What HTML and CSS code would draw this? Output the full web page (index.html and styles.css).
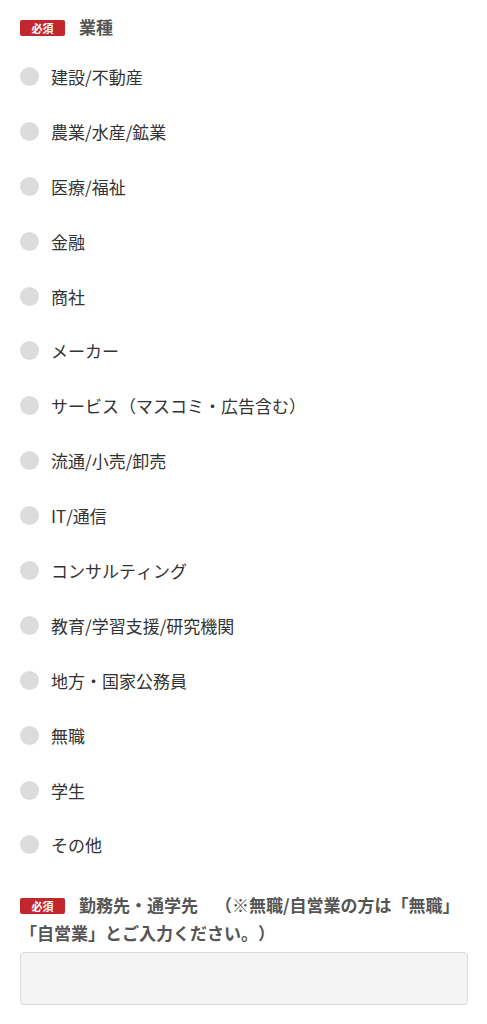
FILE: index.html
```html
<!DOCTYPE html>
<html lang="ja">
<head>
<meta charset="utf-8">
<link rel="stylesheet" href="styles.css">
</head>
<body>
<div class="form">
  <div class="field-head">
    <span class="badge">必須</span><span class="head-text">業種</span>
  </div>
  <ul class="radios">
    <li class="radio"><span class="dot"></span><span class="label">建設/不動産</span></li>
    <li class="radio"><span class="dot"></span><span class="label">農業/水産/鉱業</span></li>
    <li class="radio"><span class="dot"></span><span class="label">医療/福祉</span></li>
    <li class="radio"><span class="dot"></span><span class="label">金融</span></li>
    <li class="radio"><span class="dot"></span><span class="label">商社</span></li>
    <li class="radio"><span class="dot"></span><span class="label">メーカー</span></li>
    <li class="radio"><span class="dot"></span><span class="label">サービス（マスコミ・広告含む）</span></li>
    <li class="radio"><span class="dot"></span><span class="label">流通/小売/卸売</span></li>
    <li class="radio"><span class="dot"></span><span class="label">IT/通信</span></li>
    <li class="radio"><span class="dot"></span><span class="label">コンサルティング</span></li>
    <li class="radio"><span class="dot"></span><span class="label">教育/学習支援/研究機関</span></li>
    <li class="radio"><span class="dot"></span><span class="label">地方・国家公務員</span></li>
    <li class="radio"><span class="dot"></span><span class="label">無職</span></li>
    <li class="radio"><span class="dot"></span><span class="label">学生</span></li>
    <li class="radio"><span class="dot"></span><span class="label">その他</span></li>
  </ul>
  <div class="field-head field-head-2">
    <span class="badge">必須</span><span class="head-text">勤務先・通学先　（※無職/自営業の方は「無職」「自営業」とご入力ください。）</span>
  </div>
  <div class="input"></div>
</div>
</body>
</html>
```
FILE: styles.css
```css
* { box-sizing: border-box; }
body {
  margin: 0;
  background: #fff;
  font-family: "Noto Sans CJK JP", "Noto Sans", sans-serif;
  color: #333;
  text-spacing-trim: space-all;
  font-kerning: none;
}
.form {
  padding: 13px 19px 0 20px;
}
.field-head {
  font-size: 17px;
  line-height: 28px;
  font-weight: bold;
  color: #555;
}
.badge {
  display: inline-block;
  width: 45px;
  height: 16px;
  line-height: 16px;
  background: #c1272d;
  color: #fff;
  font-size: 11px;
  font-weight: bold;
  text-align: center;
  border-radius: 2px;
  margin-right: 14px;
  vertical-align: 1px;
}
.radios {
  list-style: none;
  margin: 8px 0 0;
  padding: 0;
}
.radio {
  height: 54.9px;
  display: flex;
  align-items: center;
  gap: 12px;
}
.dot {
  width: 19px;
  height: 19px;
  border-radius: 50%;
  background: #dcdcdc;
  flex: none;
}
.label {
  font-size: 17px;
  color: #333;
}
.field-head-2 {
  margin-top: 19px;
}
.input {
  margin-top: 5px;
  height: 53px;
  background: #f4f4f4;
  border: 1px solid #dcdcdc;
  border-radius: 4px;
}
```
